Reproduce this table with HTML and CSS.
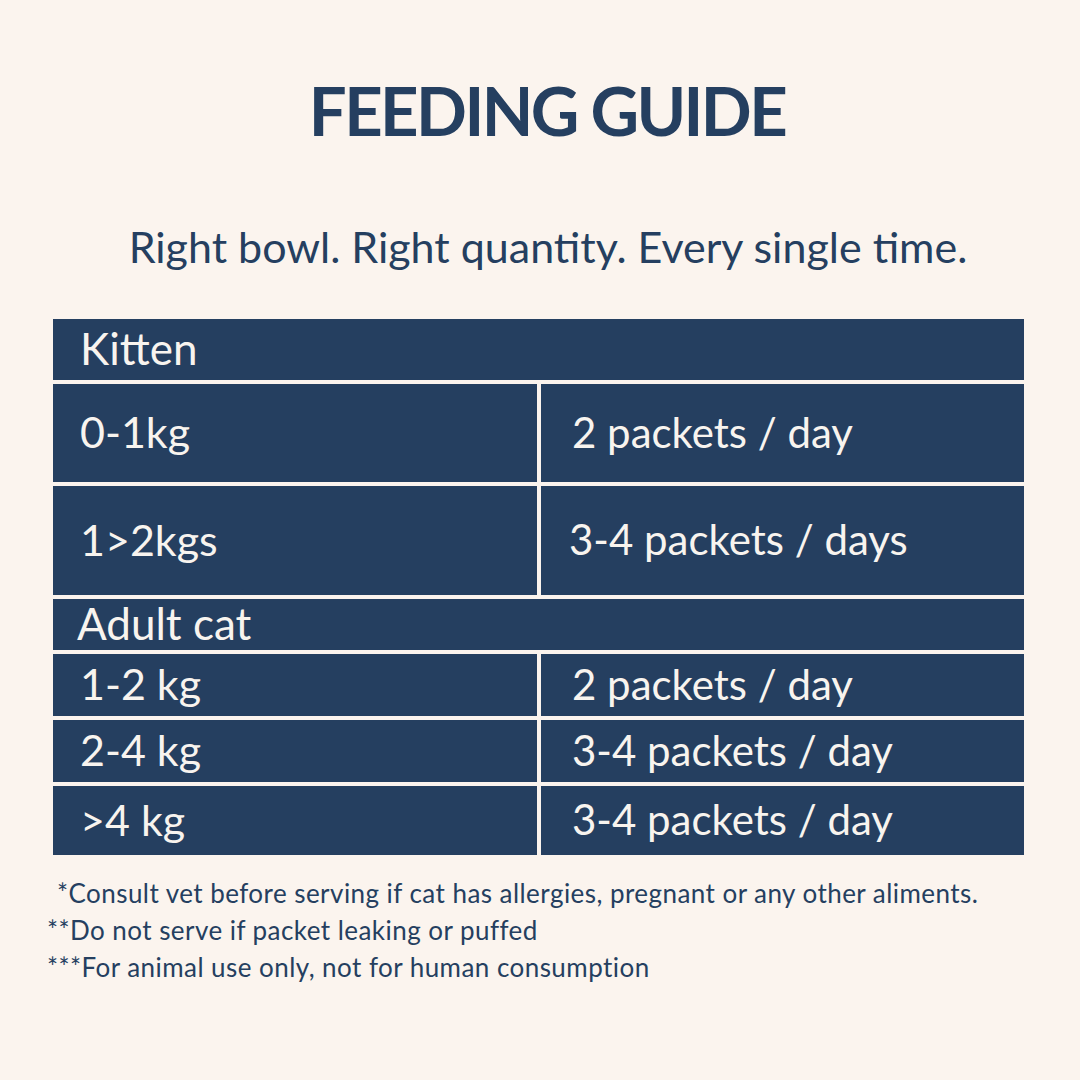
FILE: index.html
```html
<!DOCTYPE html>
<html lang="en">
<head>
<meta charset="utf-8">
<title>Feeding Guide</title>
<link rel="stylesheet" href="styles.css">
</head>
<body>
<main class="page">
  <h1 class="title">FEEDING GUIDE</h1>
  <p class="subtitle">Right bowl. Right quantity. Every single time.</p>
  <div class="guide">
    <div class="cell head h-kitten">Kitten</div>
    <div class="cell r-tall1">0-1kg</div>
    <div class="cell val r-tall1">2 packets / day</div>
    <div class="cell r-tall2">1&gt;2kgs</div>
    <div class="cell val r-tall2 val-left">3-4 packets / days</div>
    <div class="cell head h-adult">Adult cat</div>
    <div class="cell r-s1">1-2 kg</div>
    <div class="cell val r-s1">2 packets / day</div>
    <div class="cell r-s2">2-4 kg</div>
    <div class="cell val r-s2">3-4 packets / day</div>
    <div class="cell r-s3">&gt;4 kg</div>
    <div class="cell val r-s3">3-4 packets / day</div>
  </div>
  <div class="notes">
    <p class="note first">*Consult vet before serving if cat has allergies, pregnant or any other aliments.</p>
    <p class="note">**Do not serve if packet leaking or puffed</p>
    <p class="note">***For animal use only, not for human consumption</p>
  </div>
</main>
</body>
</html>
```

FILE: styles.css
```css
html, body {
  margin: 0;
  padding: 0;
  background: #fbf4ee;
}

.page {
  width: 1080px;
  height: 1080px;
  box-sizing: border-box;
  padding-top: 70px;
  font-family: "Lato", "Open Sans", sans-serif;
  color: #253f60;
}

.title {
  margin: 0;
  text-align: center;
  font-size: 67px;
  line-height: 80px;
  font-weight: 700;
  padding-left: 14px;
  letter-spacing: -2.6px;
}

.subtitle {
  margin: 73px 0 0 0;
  text-align: center;
  font-size: 43px;
  line-height: 48px;
  padding-left: 16px;
}

.guide {
  margin: 48px 0 0 53px;
  width: 971px;
  display: grid;
  grid-template-columns: 484px 483px;
  grid-template-rows: 61px 98px 109px 51px 62px 62px 69px;
  gap: 4px;
}

.cell {
  background: #253f60;
  color: #f8f4ef;
  font-size: 43px;
  display: flex;
  align-items: center;
  padding-left: 27px;
  padding-bottom: 3px;
}

.cell.val {
  padding-left: 31px;
  font-size: 42px;
}

.cell.val-left {
  padding-left: 28px;
}

.head {
  grid-column: 1 / span 2;
}

.h-kitten {
  font-size: 44px;
}

.h-adult {
  padding-left: 24px;
  font-size: 44px;
}

.notes {
  margin: 20px 0 0 47px;
}

.note {
  margin: 0;
  font-size: 26px;
  line-height: 37px;
  letter-spacing: 0.45px;
}

.note.first {
  padding-left: 10px;
}
```
